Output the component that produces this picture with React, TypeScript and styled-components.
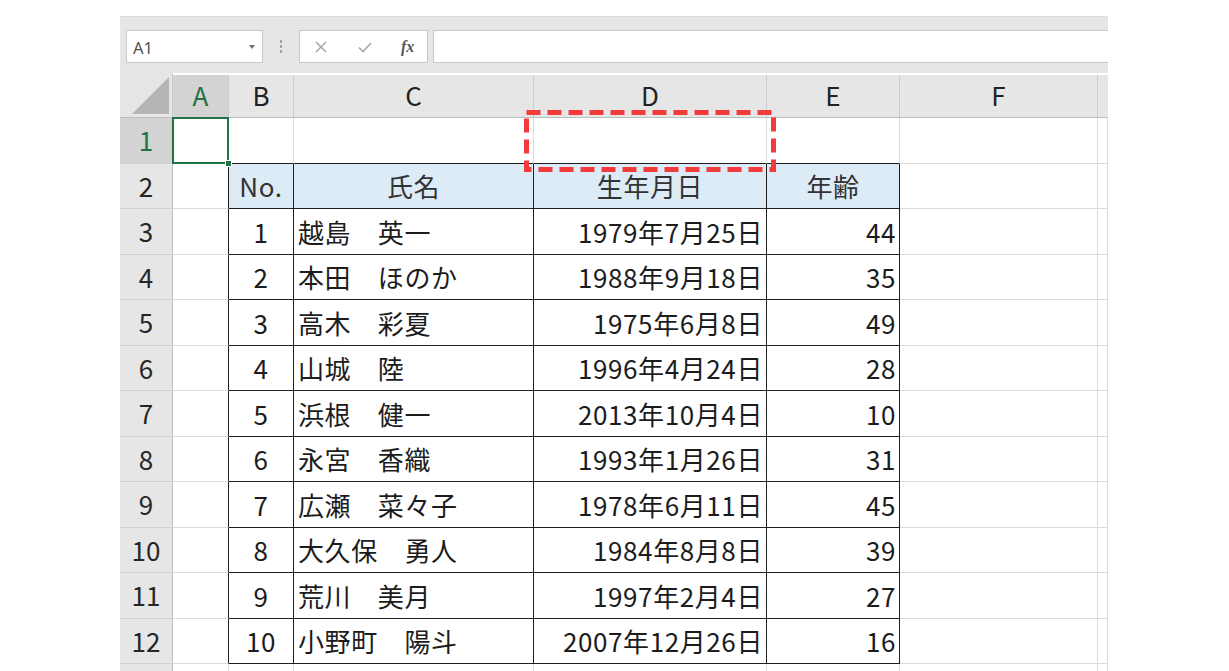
import React from 'react'
import styled, { createGlobalStyle } from 'styled-components'

const GlobalStyle = createGlobalStyle`
  html, body {
    margin: 0;
    padding: 0;
    background: #ffffff;
  }
  body {
    font-family: "Noto Sans CJK JP", "Noto Sans", sans-serif;
  }
`

const GREEN = '#217346'
const GRID = '#dadada'
const LINE = '#1e1e1e'

const people: [number, string, string, number][] = [
  [1, '越島　英一', '1979年7月25日', 44],
  [2, '本田　ほのか', '1988年9月18日', 35],
  [3, '高木　彩夏', '1975年6月8日', 49],
  [4, '山城　陸', '1996年4月24日', 28],
  [5, '浜根　健一', '2013年10月4日', 10],
  [6, '永宮　香織', '1993年1月26日', 31],
  [7, '広瀬　菜々子', '1978年6月11日', 45],
  [8, '大久保　勇人', '1984年8月8日', 39],
  [9, '荒川　美月', '1997年2月4日', 27],
  [10, '小野町　陽斗', '2007年12月26日', 16],
]

// G is only a sliver at the right edge, its letter is out of view
const columns = ['A', 'B', 'C', 'D', 'E', 'F', '']

function App() {
  const rows = Array.from({ length: 13 }, (_, i) => i + 1)

  const cellContent = (r: number, ci: number) => {
    if (r === 2) {
      const heads = ['', 'No.', '氏名', '生年月日', '年齢']
      return { text: heads[ci] || '', align: 'center' as const }
    }
    if (r >= 3 && r <= 12) {
      const p = people[r - 3]
      if (ci === 1) return { text: String(p[0]), align: 'center' as const }
      if (ci === 2) return { text: p[1], align: 'left' as const }
      if (ci === 3) return { text: p[2], align: 'right' as const }
      if (ci === 4) return { text: String(p[3]), align: 'right' as const }
    }
    return { text: '', align: 'left' as const }
  }

  return (
    <>
      <GlobalStyle />
      <Page>
        <Workbook>
          <FormulaBar>
            <NameBox>
              <span>A1</span>
              <Caret />
            </NameBox>
            <Grip>
              <i />
              <i />
              <i />
            </Grip>
            <FxBox>
              <FxIcon viewBox="0 0 16 16">
                <path d="M3 3 L13 13 M13 3 L3 13" />
              </FxIcon>
              <FxIcon viewBox="0 0 16 16">
                <path d="M2 8.5 L6 12.5 L14 4" />
              </FxIcon>
              <FxLabel>fx</FxLabel>
            </FxBox>
            <FormulaInput />
          </FormulaBar>

          <Sheet>
            <Corner>
              <CornerTriangle />
            </Corner>
            {columns.map((c, ci) => (
              <ColHead key={ci} $active={ci === 0} $last={ci === columns.length - 1}>
                {c}
              </ColHead>
            ))}

            {rows.map((r) => (
              <React.Fragment key={r}>
                {/* row 13 only peeks in at the bottom, its number is below the fold */}
                <RowHead $active={r === 1}>{r <= 12 ? r : ''}</RowHead>
                {columns.map((_, ci) => {
                  const { text, align } = cellContent(r, ci)
                  const rightLine = r >= 2 && r <= 12 && ci <= 4
                  const bottomLine = r <= 12 && ci >= 1 && ci <= 4
                  return (
                    <Cell
                      key={ci}
                      $align={align}
                      $header={r === 2 && ci >= 1 && ci <= 4}
                      $rightLine={rightLine}
                      $bottomLine={bottomLine}
                      $selected={r === 1 && ci === 0}
                    >
                      {text}
                    </Cell>
                  )
                })}
              </React.Fragment>
            ))}

            <Callout width="252" height="62" viewBox="0 0 252 62">
              <rect
                x="2.5"
                y="2.5"
                width="247"
                height="57"
                fill="none"
                stroke="#f23b3b"
                strokeWidth="5"
                strokeDasharray="14 7"
              />
            </Callout>
          </Sheet>
        </Workbook>
      </Page>
    </>
  )
}

const Page = styled.div`
  width: 1229px;
  height: 671px;
  overflow: hidden;
  box-sizing: border-box;
  padding: 16px 0 0 120px;
`

const Workbook = styled.div`
  width: 988px;
  display: flex;
  flex-direction: column;
`

const FormulaBar = styled.div`
  height: 57px;
  box-sizing: border-box;
  background: #e6e6e6;
  border-top: 1px solid #dcdcdc;
  display: flex;
  align-items: flex-start;
  padding: 13px 0 0 6px;
`

const NameBox = styled.div`
  width: 137px;
  height: 33px;
  box-sizing: border-box;
  background: #ffffff;
  border: 1px solid #c8c8c8;
  display: flex;
  align-items: center;
  justify-content: space-between;
  padding: 2px 7px 0 6px;
  font-family: "Noto Sans", "Open Sans", sans-serif;
  font-size: 16.5px;
  color: #505050;
`

const Caret = styled.span`
  width: 0;
  height: 0;
  border-left: 3px solid transparent;
  border-right: 3px solid transparent;
  border-top: 4px solid #6f6f6f;
  margin-top: -2px;
`

const Grip = styled.div`
  width: 36px;
  height: 33px;
  display: flex;
  flex-direction: column;
  align-items: center;
  justify-content: center;
  gap: 2px;

  i {
    display: block;
    width: 2px;
    height: 3px;
    background: #a3a3a3;
  }
`

const FxBox = styled.div`
  width: 129px;
  height: 33px;
  box-sizing: border-box;
  background: #ffffff;
  border: 1px solid #c8c8c8;
  display: flex;
  align-items: center;
  padding: 0 10px 0 13px;
  gap: 28px;
`

const FxIcon = styled.svg`
  width: 16px;
  height: 16px;
  fill: none;
  stroke: #a8a8a8;
  stroke-width: 1.6;
`

const FxLabel = styled.span`
  font-family: "Liberation Serif", "DejaVu Serif", serif;
  font-style: italic;
  font-weight: bold;
  font-size: 16px;
  color: #555555;
`

const FormulaInput = styled.div`
  flex: 1;
  height: 33px;
  margin-left: 5px;
  box-sizing: border-box;
  background: #ffffff;
  border: 1px solid #c8c8c8;
  border-right: none;
`

const Sheet = styled.div`
  position: relative;
  display: grid;
  grid-template-columns: 53px 56px 65px 240px 233px 133px 198px 1fr;
  grid-template-rows: 45px repeat(13, 45.5px);
  height: 598px;
  overflow: hidden;
  font-size: 26px;
  color: #1c1c1c;
`

const HeadBase = styled.div`
  box-sizing: border-box;
  display: flex;
  align-items: center;
  justify-content: center;
  background: #e6e6e6;
  line-height: 1;
`

const Corner = styled(HeadBase)`
  position: relative;
  border-bottom: 1px solid #bdbdbd;
  border-right: 1px solid #c9c9c9;
`

const CornerTriangle = styled.div`
  position: absolute;
  right: 3px;
  bottom: 3px;
  width: 0;
  height: 0;
  border-left: 37px solid transparent;
  border-bottom: 37px solid #b5b5b5;
`

const ColHead = styled(HeadBase)<{ $active?: boolean; $last?: boolean }>`
  margin-top: 2px;
  background: ${(p) => (p.$active ? '#d3d3d3' : '#e6e6e6')};
  color: ${(p) => (p.$active ? GREEN : '#222222')};
  border-bottom: 1px solid #bdbdbd;
  border-right: ${(p) => (p.$last ? 'none' : '1px solid #cdcdcd')};
  padding-bottom: 3px;
`

const RowHead = styled(HeadBase)<{ $active?: boolean }>`
  background: ${(p) => (p.$active ? '#d3d3d3' : '#e6e6e6')};
  color: ${(p) => (p.$active ? GREEN : '#262626')};
  border-right: 1px solid #bdbdbd;
  border-bottom: 1px solid #d2d2d2;
`

const Cell = styled.div<{
  $align: 'left' | 'center' | 'right'
  $header?: boolean
  $rightLine?: boolean
  $bottomLine?: boolean
  $selected?: boolean
}>`
  position: relative;
  box-sizing: border-box;
  display: flex;
  align-items: center;
  justify-content: ${(p) =>
    p.$align === 'center' ? 'center' : p.$align === 'right' ? 'flex-end' : 'flex-start'};
  padding: 1px ${(p) => (p.$align === 'right' ? '3px' : '4px')} 0 4px;
  white-space: nowrap;
  line-height: 1;
  letter-spacing: 0.6px;
  background: ${(p) => (p.$header ? '#ddebf7' : '#ffffff')};
  color: ${(p) => (p.$header ? '#333333' : '#1c1c1c')};
  border-right: 1px solid ${(p) => (p.$rightLine ? LINE : GRID)};
  border-bottom: 1px solid ${(p) => (p.$bottomLine ? LINE : GRID)};

  ${(p) =>
    p.$selected &&
    `
    z-index: 2;
    &::after {
      content: '';
      position: absolute;
      left: -1px;
      top: -1px;
      right: -1px;
      bottom: -1px;
      border: 2px solid ${GREEN};
    }
    &::before {
      content: '';
      position: absolute;
      right: -4px;
      bottom: -4px;
      width: 5px;
      height: 5px;
      background: ${GREEN};
      border: 1px solid #ffffff;
      z-index: 3;
    }
  `}
`

const Callout = styled.svg`
  position: absolute;
  left: 404px;
  top: 37px;
  z-index: 4;
  pointer-events: none;
`

export default App
